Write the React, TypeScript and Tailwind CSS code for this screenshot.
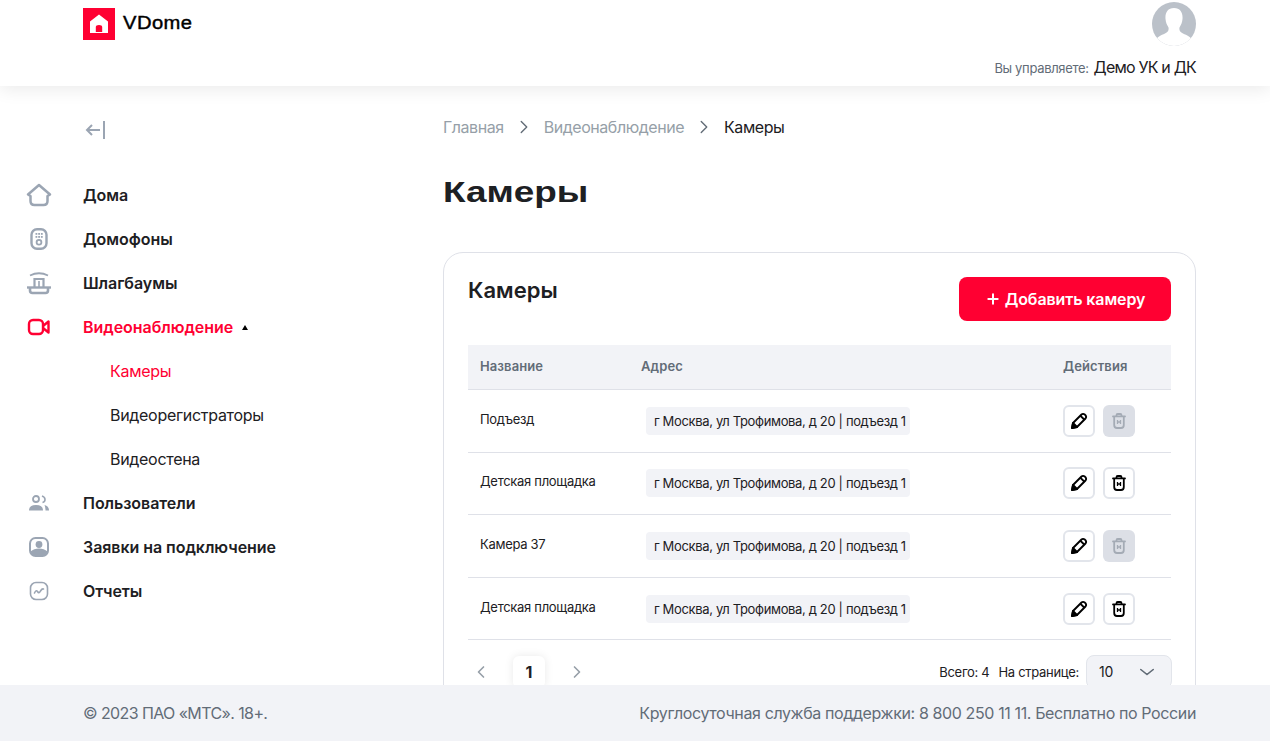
import { ChevronLeft, ChevronRight, ChevronDown, ChevronRight as Sep, Plus } from "lucide-react";

const iconGray = "#9ba5b3";

function HomeIcon() {
  return (
    <svg width="26" height="24" viewBox="0 0 26 24" fill="none" stroke={iconGray} strokeWidth="2.5" strokeLinejoin="round">
      <path d="M13 2 L24 11.5 L21.5 13 V18 Q21.5 22 17.5 22 H8.5 Q4.5 22 4.5 18 V13 L2 11.5 Z" />
    </svg>
  );
}

function IntercomIcon() {
  return (
    <svg width="18" height="22" viewBox="0 0 18 22" fill="none">
      <rect x="1.5" y="1.2" width="15" height="19.6" rx="5.5" stroke={iconGray} strokeWidth="2.4" />
      <g fill={iconGray}>
        <rect x="5.5" y="5" width="1.8" height="1.8" />
        <rect x="8.2" y="5" width="1.8" height="1.8" />
        <rect x="10.9" y="5" width="1.8" height="1.8" />
        <rect x="5.5" y="8" width="1.8" height="1.8" />
        <rect x="8.2" y="8" width="1.8" height="1.8" />
        <rect x="10.9" y="8" width="1.8" height="1.8" />
      </g>
      <circle cx="9" cy="14.2" r="2.4" stroke={iconGray} strokeWidth="1.8" />
    </svg>
  );
}

function BarrierIcon() {
  return (
    <svg width="26" height="24" viewBox="0 0 26 24" fill="none" stroke={iconGray} strokeWidth="2.2">
      <path d="M4 4.5 Q13 0 22 4.5" strokeWidth="1.8" />
      <path d="M8.5 16 V8 H17.5 V16" />
      <path d="M13 10 V16" strokeWidth="1.6" />
      <path d="M1 16.5 H25" strokeWidth="2.4" />
      <path d="M4 17 V19.5 Q4 22 6.5 22 H19.5 Q22 22 22 19.5 V17" strokeWidth="2.6" />
    </svg>
  );
}

function VideoIcon() {
  return (
    <svg width="24" height="18" viewBox="0 0 24 18" fill="none" stroke="#ff0032" strokeWidth="2.4" strokeLinejoin="round">
      <rect x="2" y="2" width="14" height="14" rx="4" />
      <path d="M16 8 L21.5 3.5 V14.5 L16 10" />
    </svg>
  );
}

function UsersIcon() {
  return (
    <svg width="22" height="18" viewBox="0 0 22 18" fill="none">
      <circle cx="8" cy="5" r="3" stroke={iconGray} strokeWidth="1.8" />
      <path d="M14 2 Q17 3 17 5.5 Q17 8 14.5 8.5" stroke={iconGray} strokeWidth="1.6" />
      <path d="M1 16.5 Q1 11 8 11 Q15 11 15 16.5 Z" fill={iconGray} />
      <path d="M16.5 11 Q21 12 21 16.5 H17.5 Q17.5 13 16.5 11 Z" fill={iconGray} />
    </svg>
  );
}

function RequestIcon() {
  return (
    <svg width="20" height="20" viewBox="0 0 20 20" fill="none">
      <rect x="1" y="1" width="18" height="18" rx="5.5" stroke={iconGray} strokeWidth="2" />
      <circle cx="10" cy="7.5" r="3.4" fill={iconGray} />
      <path d="M1.5 16 V14.5 Q5 11.5 10 11.5 Q15 11.5 18.5 14.5 V16 Q18 19 14 19 H6 Q2 19 1.5 16 Z" fill={iconGray} />
    </svg>
  );
}

function ReportIcon() {
  return (
    <svg width="20" height="20" viewBox="0 0 20 20" fill="none" stroke={iconGray} strokeWidth="1.6" strokeLinecap="round" strokeLinejoin="round">
      <rect x="1.5" y="1.5" width="17" height="17" rx="5.5" />
      <path d="M5.5 12 Q7 8.5 8.5 10.5 Q10 13 11.5 10 Q13 7.5 14.5 8" />
    </svg>
  );
}

function PencilIcon() {
  return (
    <svg width="18" height="18" viewBox="0 0 18 18" fill="none" stroke="#000" strokeWidth="1.9" strokeLinejoin="round">
      <path d="M2 16 L3 11 L11.5 2.5 Q13 1.2 14.8 2.6 L15.4 3.2 Q16.8 5 15.5 6.5 L7 15 Z" />
      <path d="M2 16 L3 11 L7 15 Z" fill="#000" />
      <path d="M10.5 3.8 L14.2 7.5" />
    </svg>
  );
}

function TrashIcon({ color }: { color: string }) {
  return (
    <svg width="14" height="16" viewBox="0 0 14 16" fill="none" stroke={color} strokeWidth="1.8" strokeLinejoin="round">
      <path d="M4.5 3 V2.2 Q4.5 1 5.7 1 H8.3 Q9.5 1 9.5 2.2 V3" />
      <path d="M1 3.4 H13" strokeLinecap="round" />
      <path d="M2.2 3.5 V12 Q2.2 15 5 15 H9 Q11.8 15 11.8 12 V3.5" />
      <path d="M5.5 7 V11 M8.5 7 V11 M5.5 9 H8.5" strokeWidth="1.3" />
    </svg>
  );
}

function Avatar() {
  return (
    <svg width="44" height="44" viewBox="0 0 44 44">
      <defs>
        <clipPath id="avatar-clip">
          <circle cx="22" cy="22" r="22" />
        </clipPath>
      </defs>
      <circle cx="22" cy="22" r="22" fill="#bbc1c9" />
      <g clipPath="url(#avatar-clip)" fill="#fff">
        <path d="M22 6 C15.5 6 13 11 13.5 17 C13.8 20.5 15 23 16.5 25.5 C17 28 16 30 13 31.5 C9 33.5 5 34.5 4.5 38 L4.5 46 H39.5 L39.5 38 C39 34.5 35 33.5 31 31.5 C28 30 27 28 27.5 25.5 C29 23 30.2 20.5 30.5 17 C31 11 28.5 6 22 6 Z" />
      </g>
    </svg>
  );
}

const menuItems = [
  { label: "Дома", icon: <HomeIcon /> },
  { label: "Домофоны", icon: <IntercomIcon /> },
  { label: "Шлагбаумы", icon: <BarrierIcon /> },
  { label: "Видеонаблюдение", icon: <VideoIcon />, active: true },
  { label: "Камеры", sub: true, active: true },
  { label: "Видеорегистраторы", sub: true },
  { label: "Видеостена", sub: true },
  { label: "Пользователи", icon: <UsersIcon /> },
  { label: "Заявки на подключение", icon: <RequestIcon /> },
  { label: "Отчеты", icon: <ReportIcon /> },
];

const cameras = [
  { name: "Подъезд", canDelete: false, h: "h-[63px]" },
  { name: "Детская площадка", canDelete: true, h: "h-[62px] pb-px" },
  { name: "Камера 37", canDelete: false, h: "h-[63px]" },
  { name: "Детская площадка", canDelete: true, h: "h-[62px]" },
];

export default function App() {
  return (
    <div className="h-[741px] flex flex-col overflow-hidden bg-white text-[#1d2023] font-['Inter',sans-serif]">
      <header className="relative z-10 h-[86px] shrink-0 bg-white pl-[83px] pr-[74px] shadow-[0_4px_16px_rgba(0,0,0,0.08)] flex justify-between">
        <div className="pt-2 flex items-start gap-2">
          <div className="w-8 h-8 bg-[#ff0032] flex items-center justify-center">
            <svg width="20" height="20" viewBox="0 0 20 20">
              <path fillRule="evenodd" fill="#fff" d="M10 0.5 L19 7.5 V19 H1 V7.5 Z M6.8 18 H13.2 V13 Q13.2 11 10 11 Q6.8 11 6.8 13 Z" />
            </svg>
          </div>
          <span className="mt-[3px] text-[18px] leading-6 font-normal [-webkit-text-stroke:0.4px_#000] tracking-[0.4px] text-black font-['Liberation_Sans',sans-serif] scale-x-[1.12] origin-left">VDome</span>
        </div>
        <div className="pt-[2px] flex flex-col items-end">
          <Avatar />
          <div className="mt-[11px] flex items-baseline gap-[5px]">
            <span className="text-[13px] tracking-[-0.33px] text-[#626c77]">Вы управляете:</span>
            <span className="text-base leading-5 tracking-[-0.8px]">Демо УК и ДК</span>
          </div>
        </div>
      </header>

      <div className="flex-1 min-h-0 flex overflow-hidden">
        <aside className="w-[443px] shrink-0 pt-[22px]">
          <div className="pl-[84px] h-[44px] flex items-center text-[#9ba5b3]">
            <svg width="22" height="20" viewBox="0 0 22 20" fill="none" stroke="currentColor" strokeWidth="2">
              <path d="M16 10 H3 M8 5 L3 10 L8 15" />
              <path d="M20 1 V19" />
            </svg>
          </div>
          <nav className="mt-[21px] flex flex-col">
            {menuItems.map((item) => (
              <div key={item.label} className="h-[44px] flex items-center">
                <div className="w-[78px] flex justify-center">{item.icon}</div>
                <span
                  className={
                    (item.sub ? "ml-[32px] font-normal tracking-[-0.3px] " : "ml-[5px] font-semibold tracking-[-0.05px] ") +
                    "text-base " +
                    (item.active ? "text-[#ff0032]" : "text-[#1d2023]")
                  }
                >
                  {item.label}
                </span>
                {item.label === "Видеонаблюдение" && (
                  <span className="ml-[9px] w-0 h-0 border-x-[3.5px] border-x-transparent border-b-[5px] border-b-black" />
                )}
              </div>
            ))}
          </nav>
        </aside>

        <main className="w-[753px] shrink-0 pt-[29px]">
          <div className="flex items-center h-6 text-base tracking-[-0.45px] text-[#969fa8]">
            <span>Главная</span>
            <Sep size={22} strokeWidth={1.5} className="mx-[9px] text-[#626c77]" />
            <span>Видеонаблюдение</span>
            <Sep size={22} strokeWidth={1.5} className="mx-[9px] text-[#626c77]" />
            <span className="text-[#1d2023]">Камеры</span>
          </div>
          <h1 className="mt-[33px] text-[30px] leading-[40px] font-bold text-[#1d2023] font-['Liberation_Sans',sans-serif] scale-x-[1.23] origin-left">Камеры</h1>

          <section className="mt-[40px] border border-[#dfe1e8] rounded-[20px] px-6 pt-6 pb-10">
            <div className="flex justify-between items-start">
              <h2 className="text-[22px] leading-7 font-semibold -mt-[1px]">Камеры</h2>
              <button className="w-[212px] h-[44px] bg-[#ff0032] rounded-lg text-white text-base font-semibold tracking-[-0.1px] flex items-center justify-center gap-1">
                <Plus size={16} strokeWidth={3} />
                Добавить камеру
              </button>
            </div>

            <div className="mt-6 h-[45px] bg-[#f2f3f7] border-b border-[#dfe1e8] grid grid-cols-[161px_422px_1fr] items-center text-[13px] font-semibold tracking-[0.1px] text-[#626c77]">
              <div className="pl-3">Название</div>
              <div className="pl-3">Адрес</div>
              <div className="pl-3">Действия</div>
            </div>

            {cameras.map((cam, i) => (
              <div key={i} className={cam.h + " border-b border-[#dfe1e8] grid grid-cols-[161px_422px_1fr] items-center text-[13px] tracking-[-0.3px]"}>
                <div className="pl-3 -mt-[2px]">{cam.name}</div>
                <div className="pl-[17px]">
                  <span className="inline-block h-7 leading-7 pl-2 pr-1 rounded bg-[#f2f3f7] whitespace-nowrap tracking-[-0.35px]">г Москва, ул Трофимова, д 20 | подъезд 1</span>
                </div>
                <div className="pl-3 flex gap-2">
                  <button className="w-8 h-8 rounded-md border-2 border-[#e2e5eb] bg-white flex items-center justify-center">
                    <PencilIcon />
                  </button>
                  {cam.canDelete ? (
                    <button className="w-8 h-8 rounded-md border-2 border-[#e2e5eb] bg-white flex items-center justify-center">
                      <TrashIcon color="#000" />
                    </button>
                  ) : (
                    <button className="w-8 h-8 rounded-md bg-[#dcdfe6] flex items-center justify-center">
                      <TrashIcon color="#a4abb5" />
                    </button>
                  )}
                </div>
              </div>
            ))}

            <div className="pt-4 flex justify-between items-start">
              <div className="flex items-center">
                <ChevronLeft size={20} strokeWidth={2} className="ml-[3px] text-[#969fa8]" />
                <div className="ml-[22px] w-8 h-8 rounded-md bg-white shadow-[0_0_10px_rgba(0,0,0,0.09)] flex items-center justify-center text-base font-bold">1</div>
                <ChevronRight size={20} strokeWidth={2} className="ml-[22px] text-[#969fa8]" />
              </div>
              <div className="flex items-start text-[13px] leading-[32px] tracking-[-0.3px] -mr-px">
                <span>Всего: 4</span>
                <span className="ml-[9px]">На странице:</span>
                <div className="ml-[7px] w-[86px] h-[34px] -mt-[1px] rounded-lg border border-[#e2e5eb] bg-[#f2f3f7] pl-3 pr-[14px] flex items-center justify-between text-sm">
                  <span>10</span>
                  <ChevronDown size={20} strokeWidth={1.5} className="text-[#626c77] scale-x-125" />
                </div>
              </div>
            </div>
          </section>
        </main>
      </div>

      <footer className="relative z-10 h-[56px] shrink-0 bg-[#f2f3f7] pl-[83px] pr-[74px] flex items-center justify-between text-base text-[#626c77]">
        <span className="tracking-[-0.6px]">© 2023 ПАО «МТС». 18+.</span>
        <span className="tracking-[-0.38px]">Круглосуточная служба поддержки: 8 800 250 11 11. Бесплатно по России</span>
      </footer>
    </div>
  );
}
